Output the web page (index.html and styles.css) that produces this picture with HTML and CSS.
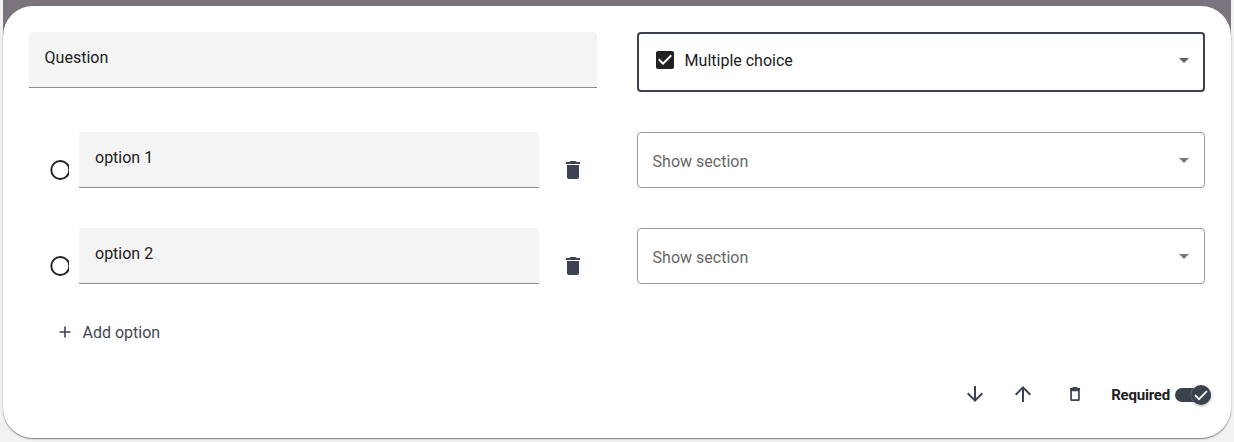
FILE: index.html
```html
<!DOCTYPE html>
<html lang="en">
<head>
<meta charset="utf-8">
<title>Question editor</title>
<link rel="stylesheet" href="styles.css">
</head>
<body>
<main class="page">
  <section class="card">
    <div class="row row-question">
      <div class="field">Question</div>
      <div class="select select-active">
        <svg class="check-icon" viewBox="0 0 24 24"><path d="M19 3H5c-1.11 0-2 .9-2 2v14c0 1.1.89 2 2 2h14c1.11 0 2-.9 2-2V5c0-1.1-.89-2-2-2zm-9 14l-5-5 1.41-1.41L10 14.17l7.59-7.59L19 8l-9 9z"/></svg>
        <span class="label">Multiple choice</span>
        <svg class="caret" viewBox="0 0 10 5"><path d="M0 0h10L5 5z"/></svg>
      </div>
    </div>
    <div class="row">
      <div class="option">
        <svg class="radio" viewBox="0 0 19 20"><circle cx="10.3" cy="10" r="9"/></svg>
        <div class="field">option 1</div>
        <svg class="trash" viewBox="0 0 24 24"><path d="M6 19c0 1.1.9 2 2 2h8c1.1 0 2-.9 2-2V7H6v12zM19 4h-3.5l-1-1h-5l-1 1H5v2h14V4z"/></svg>
      </div>
      <div class="select">
        <span class="label">Show section</span>
        <svg class="caret" viewBox="0 0 10 5"><path d="M0 0h10L5 5z"/></svg>
      </div>
    </div>
    <div class="row">
      <div class="option">
        <svg class="radio" viewBox="0 0 19 20"><circle cx="10.3" cy="10" r="9"/></svg>
        <div class="field">option 2</div>
        <svg class="trash" viewBox="0 0 24 24"><path d="M6 19c0 1.1.9 2 2 2h8c1.1 0 2-.9 2-2V7H6v12zM19 4h-3.5l-1-1h-5l-1 1H5v2h14V4z"/></svg>
      </div>
      <div class="select">
        <span class="label">Show section</span>
        <svg class="caret" viewBox="0 0 10 5"><path d="M0 0h10L5 5z"/></svg>
      </div>
    </div>
    <div class="add">
      <svg class="plus" viewBox="0 0 12 12"><path d="M6 .5v11M.5 6h11"/></svg>
      <span>Add option</span>
    </div>
    <div class="footer">
      <svg class="arrow" viewBox="0 0 24 24"><path d="M20 12l-1.41-1.41L13 16.17V4h-2v12.17l-5.58-5.59L4 12l8 8 8-8z"/></svg>
      <svg class="arrow" viewBox="0 0 24 24"><path d="M4 12l1.41 1.41L11 7.83V20h2V7.83l5.58 5.59L20 12l-8-8-8 8z"/></svg>
      <svg class="bin" viewBox="0 0 12 14"><path d="M3.5 0h5v1H11v2H1V1h2.5z"/><path fill-rule="evenodd" d="M1.2 3h9.6v9.500q0 1.500-1.500 1.500H2.700q-1.500 0-1.500-1.500zM2.900 4.300v8h6.200v-8z"/></svg>
      <span class="required">Required</span>
      <span class="toggle"><span class="knob"><svg viewBox="0 0 14 12"><path d="M1 6.2l4 4L13 2"/></svg></span></span>
    </div>
  </section>
</main>
</body>
</html>
```

FILE: styles.css
```css
* { box-sizing: border-box; }
body {
  margin: 0;
  background: #f2f2f2;
  font: 16px/24px Roboto, sans-serif;
  color: #212121;
}
svg { display: block; flex: none; }
.page {
  width: 1228px;
  height: 442px;
  margin-left: 3px;
  padding-top: 6px;
  background: linear-gradient(#7b737e 36px, transparent 36px);
}
.card {
  height: 432px;
  padding: 26px;
  border-radius: 30px;
  background: #fff;
  box-shadow: 0 1px 1px rgba(0,0,0,.4), 0 1px 3px rgba(0,0,0,.12);
}
.row {
  display: grid;
  grid-template-columns: 568px 568px;
  column-gap: 40px;
  align-items: start;
  height: 96px;
}
.row-question { height: 100px; }
.field {
  height: 56px;
  padding: 14px 15.6px;
  border-bottom: 1px solid #8c8c8c;
  border-radius: 4px 4px 0 0;
  background: #f4f4f4;
}
.option { display: flex; align-items: flex-start; padding-left: 21px; }
.option .field { width: 460px; margin: 0 21.6px 0 10px; padding-left: 16px; }
.radio { width: 19px; height: 20px; margin-top: 28px; fill: none; stroke: #212121; stroke-width: 1.9; }
.trash { width: 24px; height: 24px; margin-top: 26px; fill: #3d4251; }
.select {
  display: flex;
  align-items: center;
  height: 56px;
  padding: 2px 15px 0 14.6px;
  border: 1px solid #999;
  border-radius: 4px;
  color: #666;
}
.select-active {
  height: 60px;
  padding: 0 14px;
  border: 2px solid #3d4050;
  color: #212121;
}
.label { flex: 1; margin-top: 2px; }
.check-icon { width: 24px; height: 24px; margin: -4px 8px 0 -0.4px; fill: #212121; }
.select-active .label { margin-top: -2px; }
.caret { width: 10px; height: 5px; margin-top: -2px; fill: #757575; }
.select-active .caret { margin-top: -4px; fill: #5c5f6c; }
.add {
  display: flex;
  align-items: center;
  gap: 11.5px;
  height: 24px;
  margin-top: -3px;
  padding-left: 30px;
  color: #444750;
}
.plus { width: 12px; height: 12px; margin-top: -2px; fill: none; stroke: #3d4251; stroke-width: 1.6; }
.footer {
  display: flex;
  align-items: center;
  justify-content: flex-end;
  height: 24px;
  margin: 38px -6px 0 0;
}
.arrow { width: 24px; height: 24px; margin: -2px 24px 0 0; fill: #3d4251; }
.bin { width: 12px; height: 14px; margin: -2px 30px 0 10px; fill: #3d4251; }
.required { margin-right: 5px; font-weight: 700; font-size: 15px; letter-spacing: -0.2px; }
.toggle {
  display: flex;
  align-items: center;
  justify-content: flex-end;
  width: 36px;
  height: 14px;
  border-radius: 7px;
  background: #3a424e;
}
.knob {
  display: grid;
  place-items: center;
  width: 20px;
  height: 20px;
  border-radius: 50%;
  background: #3a424e;
  box-shadow: 0 0 1px 0.5px rgba(255,255,255,.35), 0 1px 3px rgba(0,0,0,.35);
}
.knob svg { width: 14px; height: 12px; fill: none; stroke: #fff; stroke-width: 1.7; }
```
